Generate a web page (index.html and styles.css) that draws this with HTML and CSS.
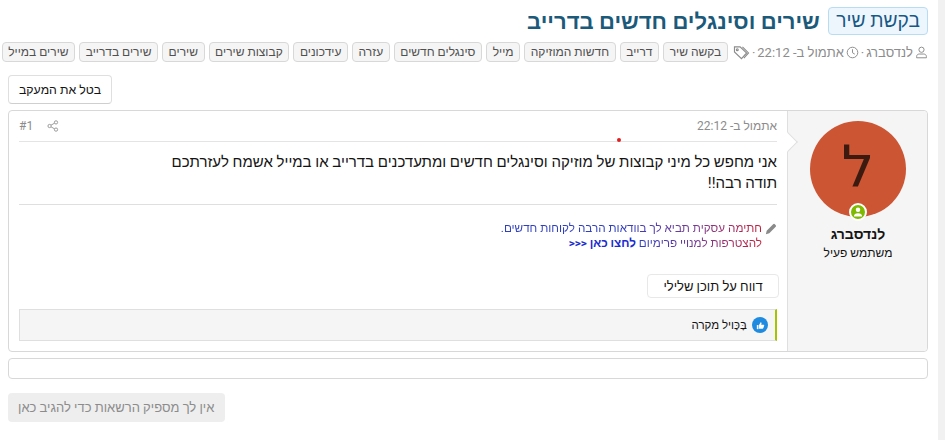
FILE: index.html
```html
<!DOCTYPE html>
<html lang="he" dir="rtl">
<head>
  <meta charset="UTF-8">
  <title>שירים וסינגלים חדשים בדרייב</title>
  <link rel="stylesheet" href="styles.css">
</head>
<body>
  <div class="page">
    <!-- Thread header -->
    <header class="thread-head">
      <h1 class="thread-title"><span class="prefix">בקשת שיר</span> שירים וסינגלים חדשים בדרייב</h1>
      <div class="thread-meta">
        <svg class="meta-icon" viewBox="0 0 16 16"><circle cx="8" cy="4.6" r="3.2"/><path d="M2 14.5v-1.6c0-1.8 1.4-3 3.2-3h5.6c1.8 0 3.2 1.2 3.2 3v1.6z"/></svg>
        <span>לנדסברג</span>
        <span class="dot">·</span>
        <svg class="meta-icon" viewBox="0 0 16 16"><circle cx="8" cy="8" r="6.5"/><path d="M8 4v4.300l2.800 1.700"/></svg>
        <span>אתמול ב- 22:12</span>
        <span class="dot">·</span>
        <svg class="meta-icon tags-icon" viewBox="0 0 18 16"><path d="M1.500 2h6l7 6.500-5.500 6-7.500-7z"/><path d="M10 2l6.500 6.500-5 5.500"/><circle cx="4.500" cy="5" r="1"/></svg>
        <a class="tag">בקשה שיר</a>
        <a class="tag">דרייב</a>
        <a class="tag">חדשות המוזיקה</a>
        <a class="tag">מייל</a>
        <a class="tag">סינגלים חדשים</a>
        <a class="tag">עזרה</a>
        <a class="tag">עידכונים</a>
        <a class="tag">קבוצות שירים</a>
        <a class="tag">שירים</a>
        <a class="tag">שירים בדרייב</a>
        <a class="tag">שירים במייל</a>
      </div>
    </header>

    <div class="actions">
      <button class="btn btn-watch">בטל את המעקב</button>
    </div>

    <!-- Post -->
    <article class="post">
      <aside class="user-cell">
        <div class="avatar-wrap">
          <div class="avatar">ל</div>
          <span class="online">
            <svg viewBox="0 0 16 16"><circle cx="8" cy="5" r="3"/><path d="M2.500 14c0-3 2-4.500 5.500-4.500s5.500 1.500 5.500 4.500z"/></svg>
          </span>
        </div>
        <div class="user-name">לנדסברג</div>
        <div class="user-title">משתמש פעיל</div>
      </aside>
      <div class="post-main">
        <div class="post-attr">
          <span>אתמול ב- 22:12</span>
          <span class="post-num">
            <svg class="share-icon" viewBox="0 0 14 14"><circle cx="10.500" cy="2.800" r="1.900"/><circle cx="3" cy="7" r="1.900"/><circle cx="10.500" cy="11.200" r="1.900"/><path d="M4.700 6l4.100-2.300M4.700 8l4.100 2.300"/></svg>
            <span>#1</span>
          </span>
          <i class="red-dot"></i>
        </div>
        <div class="post-body">
          אני מחפש כל מיני קבוצות של מוזיקה וסינגלים חדשים ומתעדכנים בדרייב או במייל אשמח לעזרתכם<br>
          תודה רבה!!
        </div>
        <div class="signature">
          <div class="sig-line">
            <svg class="pencil" viewBox="0 0 14 14"><path d="M1 13l1-4 7.500-7.500a1.400 1.400 0 0 1 2 0l1 1a1.400 1.400 0 0 1 0 2L5 12z"/></svg>
            <span class="sig-grad sig-first">חתימה עסקית תביא לך בוודאות הרבה לקוחות חדשים.</span>
          </div>
          <div class="sig-line">
            <span class="sig-grad sig-second">להצטרפות למנויי פרימיום</span> <b class="sig-link">לחצו כאן &lt;&lt;&lt;</b>
          </div>
        </div>
        <div class="post-foot">
          <button class="btn btn-report">דווח על תוכן שלילי</button>
        </div>
        <div class="likes">
          <span class="like-icon">
            <svg viewBox="0 0 16 16"><path d="M3.500 7.500h2v5h-2z"/><path d="M6.200 7.500l2-3.500c.9 0 1.300.7 1 1.700l-.4 1.300h2.900c.7 0 1 .6.800 1.200l-1 3c-.2.500-.5.800-1 .8H6.200z"/></svg>
          </span>
          <span>בָּכָּויל מקרה</span>
        </div>
      </div>
    </article>

    <div class="empty-block"></div>

    <div class="actions-bottom">
      <span class="btn-disabled">אין לך מספיק הרשאות כדי להגיב כאן</span>
    </div>
  </div>
  <div class="scroll-strip"></div>
</body>
</html>
```

FILE: styles.css
```css
html, body {
  height: 100%;
}

body {
  margin: 0;
  background-color: #fff;
  color: #141414;
  font-family: Roboto, "Liberation Sans", sans-serif;
  font-size: 13px;
  overflow: hidden;
  display: flex;
}

.page {
  width: 920px;
  margin-right: 17px;
  margin-left: 8px;
  flex: none;
}

.scroll-strip {
  position: fixed;
  top: 0;
  right: 0;
  bottom: 0;
  width: 7px;
  background-color: #f1f1f1;
}

.thread-head {
  padding-top: 7px;
}

.thread-title {
  margin: 0;
  font-size: 22px;
  font-weight: 700;
  line-height: 30px;
  color: #1b5a7a;
  white-space: nowrap;
}

.prefix {
  display: inline-block;
  font-size: 19.2px;
  font-weight: 400;
  line-height: 26px;
  padding: 0 7px;
  color: #185886;
  background-color: #edf6fd;
  border: 1px solid #b9dcf5;
  border-radius: 4px;
  vertical-align: top;
  margin-left: 3px;
}

.thread-meta {
  display: flex;
  align-items: center;
  gap: 2px;
  margin-top: 4px;
  height: 22px;
  color: #8c8c8c;
  white-space: nowrap;
}

.meta-icon {
  width: 13px;
  height: 13px;
  fill: none;
  stroke: #8c8c8c;
  stroke-width: 1.2;
  flex: none;
}

.tags-icon {
  width: 17px;
  height: 15px;
  margin-left: 3px;
}

.tag {
  flex: none;
  font-size: 12px;
  line-height: 18px;
  padding: 0 5.6px;
  margin-left: 2px;
  color: #505050;
  background-color: #f5f5f5;
  border: 1px solid #d8d8d8;
  border-radius: 4px;
}

.actions {
  margin-top: 12px;
  display: flex;
  justify-content: flex-end;
}

.btn {
  font-family: inherit;
  font-size: 13px;
  color: #141414;
  background-color: #fff;
  border: 1px solid #dfdfdf;
  border-bottom-color: #cfcfcf;
  border-radius: 4px;
  padding: 0 10px;
  height: 29px;
}

.btn-watch {
  font-size: 12.3px;
}

.post {
  display: flex;
  margin-top: 6px;
  height: 242px;
  border: 1px solid #d8d8d8;
  border-radius: 4px;
  box-sizing: border-box;
}

.user-cell {
  width: 140px;
  flex: none;
  box-sizing: border-box;
  padding: 10px 0 0 1px;
  background-color: #f5f5f5;
  border-left: 1px solid #dfdfdf;
  border-radius: 0 4px 4px 0;
  text-align: center;
  position: relative;
}

.user-cell::after {
  content: "";
  position: absolute;
  left: -7px;
  top: 24px;
  width: 13px;
  height: 13px;
  background-color: #fff;
  border-top: 1px solid #dfdfdf;
  border-right: 1px solid #dfdfdf;
  transform: rotate(45deg);
}

.avatar-wrap {
  position: relative;
  width: 96px;
  height: 96px;
  margin: 0 auto;
}

.avatar {
  width: 96px;
  height: 96px;
  border-radius: 50%;
  background-color: #cc5533;
  color: #3d1a10;
  font-family: "DejaVu Sans", sans-serif;
  font-size: 58px;
  line-height: 92px;
}

.online {
  position: absolute;
  bottom: -4px;
  left: 39px;
  width: 18px;
  height: 18px;
  box-sizing: border-box;
  border: 2px solid #fff;
  border-radius: 50%;
  background-color: #7fb900;
  display: flex;
  align-items: center;
  justify-content: center;
}

.online svg {
  width: 12px;
  height: 12px;
  fill: #fff;
}

.user-name {
  margin-top: 7px;
  font-size: 14px;
  font-weight: 700;
  line-height: 20px;
}

.user-title {
  font-size: 12px;
  line-height: 18px;
}

.post-main {
  flex: 1;
  min-width: 0;
  padding: 0 10px;
}

.post-attr {
  position: relative;
  display: flex;
  justify-content: space-between;
  align-items: center;
  height: 30px;
  border-bottom: 1px solid #e4e4e4;
  color: #8c8c8c;
  font-size: 12px;
}

.post-num {
  display: flex;
  align-items: center;
  gap: 14px;
}

.share-icon {
  width: 12px;
  height: 12px;
  fill: none;
  stroke: #8c8c8c;
  stroke-width: 1;
}

.red-dot {
  position: absolute;
  left: 598px;
  bottom: -1px;
  width: 4px;
  height: 4px;
  border-radius: 50%;
  background-color: #e02020;
}

.post-body {
  padding-top: 10px;
  height: 52px;
  font-size: 15px;
  line-height: 21px;
  border-bottom: 1px solid #dfdfdf;
}

.signature {
  margin-top: 16px;
  height: 53px;
  font-size: 11.7px;
  line-height: 15px;
}

.sig-line {
  display: flex;
  align-items: center;
  gap: 3px;
}

.pencil {
  width: 12px;
  height: 12px;
  fill: #8a8a8a;
  flex: none;
}

.sig-grad {
  color: transparent;
  -webkit-background-clip: text;
  background-clip: text;
}

.sig-first {
  background-image: linear-gradient(to left, #c41f3a 0, #7a3a90 25%, #2f3fc0 55%, #2f3fc0 100%);
}

.sig-second {
  margin-right: 15px;
  background-image: linear-gradient(to left, #c41f3a 0, #7a3a90 50%, #2f3fc0 100%);
}

.sig-link {
  color: #1a2bd0;
}

.post-foot {
  display: flex;
  justify-content: flex-start;
  margin-right: -2px;
}

.btn-report {
  height: 24px;
  width: 132px;
  padding: 0;
  border-color: #e8e8e8;
}

.likes {
  display: flex;
  align-items: center;
  gap: 5px;
  margin-top: 11px;
  height: 32px;
  box-sizing: border-box;
  padding-right: 7px;
  font-size: 11.5px;
  background-color: #f5f5f5;
  border: 1px solid #dfdfdf;
  border-right: 2px solid #a5c400;
}

.like-icon {
  width: 16px;
  height: 16px;
  border-radius: 50%;
  background-color: #1f8be0;
  display: flex;
  align-items: center;
  justify-content: center;
}

.like-icon svg {
  width: 13px;
  height: 13px;
  fill: #fff;
}

.empty-block {
  margin-top: 6px;
  height: 21px;
  border: 1px solid #d8d8d8;
  border-radius: 4px;
  box-sizing: border-box;
}

.actions-bottom {
  margin-top: 14px;
  display: flex;
  justify-content: flex-end;
}

.btn-disabled {
  display: block;
  font-size: 13px;
  line-height: 29px;
  padding: 0 11px 0 10px;
  color: #8c8c8c;
  background-color: #eeeeee;
  border-radius: 4px;
}
```
